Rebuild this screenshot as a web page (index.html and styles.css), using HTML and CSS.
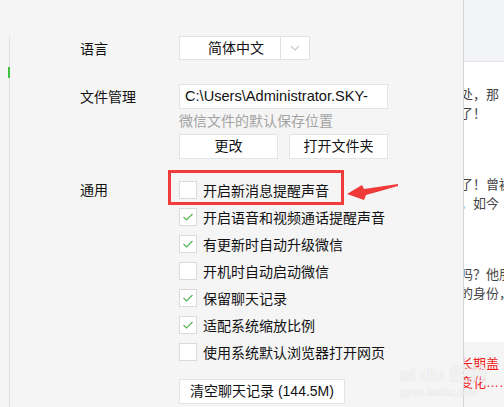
FILE: index.html
```html
<!DOCTYPE html>
<html lang="zh-CN">
<head>
    <meta charset="UTF-8">
    <title>设置 - 通用</title>
    <link rel="stylesheet" href="styles.css">
</head>
<body>

    <div class="window">
        <div class="settings">
            <div class="side-line"><span class="side-mark"></span></div>

            <div class="section section-lang">
                <div class="label">语言</div>
                <div class="select">
                    <span class="select-value">简体中文</span>
                    <span class="select-arrow">
                        <svg width="10" height="6" viewBox="0 0 10 6"><polyline points="1,1 5,5 9,1" fill="none" stroke="#c9c9c9" stroke-width="1.2"/></svg>
                    </span>
                </div>
            </div>

            <div class="section section-file">
                <div class="label">文件管理</div>
                <div class="field">
                    <div class="path-input">C:\Users\Administrator.SKY-</div>
                    <div class="hint">微信文件的默认保存位置</div>
                    <div class="btn-row">
                        <button class="btn btn-half">更改</button>
                        <button class="btn btn-half">打开文件夹</button>
                    </div>
                </div>
            </div>

            <div class="section section-general">
                <div class="label">通用</div>
                <div class="field">
                    <div class="check-row">
                        <span class="box"></span>开启新消息提醒声音
                        <div class="highlight"></div>
                        <svg class="arrow" width="60" height="24" viewBox="0 0 60 24">
                            <polygon points="3,14 18,5 20,9 54,4 54,6 22,15 20,20" fill="#f03a3a"/>
                        </svg>
                    </div>
                    <div class="check-row"><span class="box checked"><svg width="16" height="16" viewBox="0 0 16 16"><polyline points="3.5,8 6.5,11 12.5,5" fill="none" stroke="#52b552" stroke-width="1.2"/></svg></span>开启语音和视频通话提醒声音</div>
                    <div class="check-row"><span class="box checked"><svg width="16" height="16" viewBox="0 0 16 16"><polyline points="3.5,8 6.5,11 12.5,5" fill="none" stroke="#52b552" stroke-width="1.2"/></svg></span>有更新时自动升级微信</div>
                    <div class="check-row"><span class="box"></span>开机时自动启动微信</div>
                    <div class="check-row"><span class="box checked"><svg width="16" height="16" viewBox="0 0 16 16"><polyline points="3.5,8 6.5,11 12.5,5" fill="none" stroke="#52b552" stroke-width="1.2"/></svg></span>保留聊天记录</div>
                    <div class="check-row"><span class="box checked"><svg width="16" height="16" viewBox="0 0 16 16"><polyline points="3.5,8 6.5,11 12.5,5" fill="none" stroke="#52b552" stroke-width="1.2"/></svg></span>适配系统缩放比例</div>
                    <div class="check-row"><span class="box"></span>使用系统默认浏览器打开网页</div>
                    <button class="btn btn-clear">清空聊天记录 (144.5M)</button>
                </div>
            </div>
        </div>

        <div class="article">
            <div class="article-head"></div>
            <div class="article-body">
                <p class="para para-1"><span>处，那</span><span>了！</span></p>
                <p class="para para-2"><span>了！曾被</span><span>，如今</span></p>
                <p class="para para-3"><span>吗？他朋</span><span>的身份，</span></p>
            </div>
            <div class="article-foot">
                <p class="para red"><span>长期盖</span><span>变化……</span></p>
            </div>
        </div>

        <div class="watermark">
            <span class="wm-logo">ai du 经验</span>
            <span class="wm-url">gyan.baidu.com</span>
        </div>
    </div>

</body>
</html>
```

FILE: styles.css
```css
* {
    box-sizing: border-box;
}

body {
    margin: 0;
    font-family: "Liberation Sans", "Noto Sans CJK SC", sans-serif;
    font-size: 14px;
    color: #111;
    overflow: hidden;
}

.window {
    display: flex;
    width: 504px;
    height: 407px;
    position: relative;
    overflow: hidden;
}

.settings {
    position: relative;
    width: 464px;
    flex-shrink: 0;
    height: 100%;
    background-color: #f5f5f5;
    border-right: 1px solid #d6d6d6;
    padding: 36px 0 0 80px;
}

.side-line {
    position: absolute;
    left: 9px;
    top: 36px;
    bottom: 0;
    width: 1px;
    background-color: #e0e0e0;
}

.side-mark {
    position: absolute;
    left: -1px;
    top: 31px;
    width: 2px;
    height: 11px;
    background-color: #3ec43e;
}

.section {
    display: flex;
}

.label {
    width: 99px;
    flex-shrink: 0;
}

.section-lang .label {
    line-height: 26px;
}

.section-file {
    margin-top: 22px;
}

.section-file .label {
    line-height: 27px;
}

.section-general {
    margin-top: 17px;
}

.section-general .label {
    line-height: 28px;
}

/* dropdown */
.select {
    display: flex;
    height: 24px;
    width: 131px;
    background-color: #fff;
    border: 1px solid #e1e1e1;
}

.select-value {
    width: 101px;
    padding-left: 28px;
    line-height: 22px;
    border-right: 1px solid #e1e1e1;
}

.select-arrow {
    flex: 1;
    display: flex;
    align-items: center;
    justify-content: center;
}

/* file */
.path-input {
    width: 209px;
    height: 25px;
    background-color: #fff;
    border: 1px solid #e4e4e4;
    padding-left: 5px;
    font-size: 14.6px;
    line-height: 23px;
    white-space: nowrap;
    overflow: hidden;
}

.hint {
    color: #a3a3a3;
    margin: 3px 0 4px;
    line-height: 18px;
}

.btn-row {
    display: flex;
    gap: 11px;
}

.btn {
    height: 25px;
    background-color: #fff;
    border: 1px solid #e4e4e4;
    font-family: inherit;
    font-size: 14px;
    color: #111;
    padding: 0;
    line-height: 23px;
}

.btn-half {
    width: 99px;
}

/* checkboxes */
.check-row {
    position: relative;
    display: flex;
    align-items: center;
    height: 27px;
    white-space: nowrap;
}

.box {
    width: 18px;
    height: 18px;
    margin-right: 6px;
    background-color: #fff;
    border: 1px solid #dadada;
    display: flex;
    align-items: center;
    justify-content: center;
}

.highlight {
    position: absolute;
    left: -11px;
    top: -6px;
    width: 176px;
    height: 35px;
    border: 3px solid #f23c3c;
}

.arrow {
    position: absolute;
    left: 165px;
    top: 4px;
}

.btn-clear {
    margin-top: 14px;
    width: 166px;
}

/* article on the right */
.article {
    flex: 1;
    display: flex;
    flex-direction: column;
    background-color: #fff;
    overflow: hidden;
}

.article-head {
    height: 62px;
    background-color: #f3f4f8;
    border-bottom: 1px solid #e4e5e8;
}

.article-body {
    height: 280px;
    padding-top: 23px;
}

.article-foot {
    flex: 1;
    background-color: #f5f5f5;
    padding-top: 12px;
}

.para {
    margin: 0;
    font-size: 13px;
    line-height: 19px;
    color: #444;
    margin-left: -4px;
}

.para span {
    display: block;
    white-space: nowrap;
}

.para-2 {
    margin-top: 52px;
}

.para-3 {
    margin-top: 52px;
}

.red {
    color: #f21c1c;
}

/* faint site watermark over the corner */
.watermark {
    position: absolute;
    left: 400px;
    top: 364px;
    display: flex;
    flex-direction: column;
    color: rgba(255, 255, 255, 0.7);
    text-shadow: 0 0 1px rgba(180, 180, 180, 0.5);
    pointer-events: none;
}

.wm-logo {
    font-size: 19px;
    font-weight: bold;
    line-height: 22px;
}

.wm-url {
    font-size: 11px;
    line-height: 12px;
}
```
